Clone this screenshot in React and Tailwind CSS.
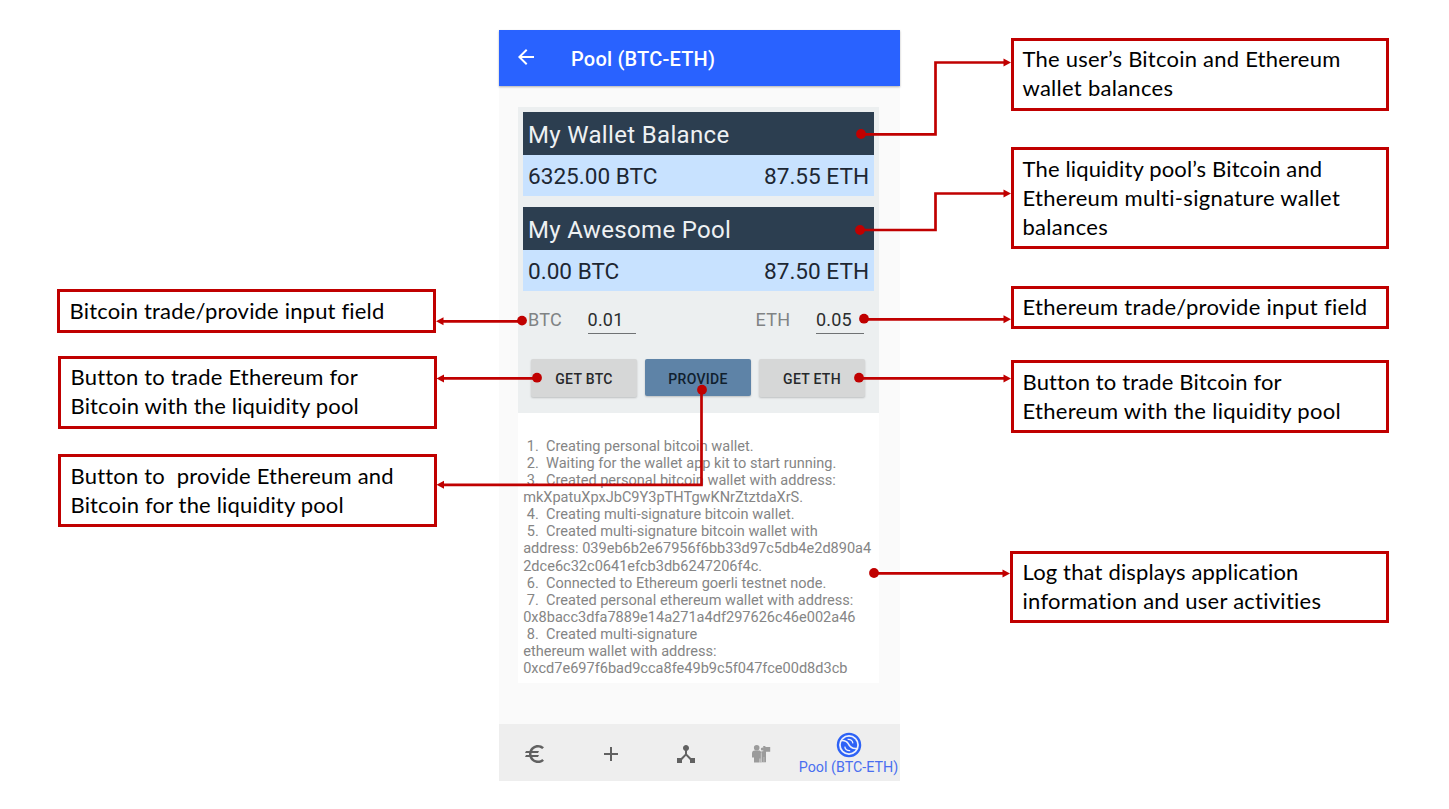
import { MdAdd, MdArrowBack, MdDeviceHub, MdEuro } from "react-icons/md";

function Callout({ className, lines }) {
  return (
    <div
      className={`shrink-0 border-[3px] border-[#c00000] bg-white font-['Lato',sans-serif] text-[22px] leading-[29px] text-black [font-variant-ligatures:none] ${className}`}
    >
      {lines.map(([text, tracking]) => (
        <div key={text} className={`whitespace-pre ${tracking}`}>
          {text}
        </div>
      ))}
    </div>
  );
}

function BalanceCard({ title, btc, eth }) {
  return (
    <section className="mb-[11px] h-[84px]">
      <h2 className="h-[43px] bg-[#2c3e50] pl-[5px] text-[24px] leading-[46px] tracking-[0.33px] text-[#eef1f3]">
        {title}
      </h2>
      <div className="flex h-[41px] justify-between bg-[#c8e2ff] pr-[5px] pl-[5px] text-[22.6px] leading-[44px] text-[#1d2733]">
        <span>{btc}</span>
        <span>{eth}</span>
      </div>
    </section>
  );
}

function AmountField({ label, value }) {
  return (
    <div className="flex gap-[25.5px]">
      <span className="text-[18px] leading-[36px] tracking-[0.3px] text-[#808384]">{label}</span>
      <span className="h-[32px] w-[48px] border-b border-[#6f7274] text-[18px] leading-[36px] tracking-[0.2px] text-[#2b2d2e]">
        {value}
      </span>
    </div>
  );
}

const logLines = [
  " 1.  Creating personal bitcoin wallet.",
  " 2.  Waiting for the wallet app kit to start running.",
  " 3.  Created personal bitcoin wallet with address:",
  "mkXpatuXpxJbC9Y3pTHTgwKNrZtztdaXrS.",
  " 4.  Creating multi-signature bitcoin wallet.",
  " 5.  Created multi-signature bitcoin wallet with",
  "address: 039eb6b2e67956f6bb33d97c5db4e2d890a4",
  "2dce6c32c0641efcb3db6247206f4c.",
  " 6.  Connected to Ethereum goerli testnet node.",
  " 7.  Created personal ethereum wallet with address:",
  "0x8bacc3dfa7889e14a271a4df297626c46e002a46",
  " 8.  Created multi-signature",
  "ethereum wallet with address:",
  "0xcd7e697f6bad9cca8fe49b9c5f047fce00d8d3cb",
];

function PeopleIcon() {
  return (
    <svg width="20" height="20" viewBox="0 0 20 20" fill="#9b9b9b">
      <circle cx="5.7" cy="3.8" r="2.8" />
      <path d="M1 9.4Q1 6.4 3.6 6.4H8.6L10.4 8V18.6H9.3V14.5H8.6V18.6H3V13.5H1Z" />
      <circle cx="11.4" cy="5" r="1.6" />
      <path d="M10.4 7.2H12.2V2H14.4V3H19.2V7.8H15V18.2H10.8Z" />
      <path d="M10.2 9V18.6M12.9 13V18.6" stroke="#cfcfcf" strokeWidth="0.6" />
    </svg>
  );
}

function PoolIcon() {
  return (
    <svg width="26" height="26" viewBox="0 0 26 26">
      <circle cx="13" cy="13" r="11.1" fill="#eef1fb" stroke="#2d62f6" strokeWidth="2.3" />
      <circle cx="13" cy="13" r="8.2" fill="#2d62f6" />
      <path
        d="M5 8.6C8 8.4 11 9.3 12.4 11.9C13.8 15 17 16.9 21 16.4"
        fill="none"
        stroke="#eef1fb"
        strokeWidth="1.5"
      />
      <path d="M11.6 7.4C14.6 7 16.6 8.8 16.9 11.3" fill="none" stroke="#eef1fb" strokeWidth="1.3" />
      <path d="M8.8 14.6C9 17.2 11.2 19 14.2 18.6" fill="none" stroke="#eef1fb" strokeWidth="1.3" />
    </svg>
  );
}

function Phone() {
  return (
    <main className="mt-[30px] flex h-[751px] w-[401px] shrink-0 flex-col bg-[#fafafa] font-['Roboto',sans-serif]">
      <header className="flex h-[56px] shrink-0 items-center bg-[#2962ff] pl-[14.5px] text-white shadow-[0_1px_2px_rgba(0,0,0,0.3)]">
        <MdArrowBack size={24} className="mb-[2px]" />
        <h1 className="pt-[2px] pl-[33.5px] text-[20px] font-medium tracking-[0.2px]">Pool (BTC-ETH)</h1>
      </header>

      <div className="mt-[21px] ml-[19px] h-[306px] w-[361px] shrink-0 bg-[#eceff0] px-[5px] pt-[5px]">
        <BalanceCard title="My Wallet Balance" btc="6325.00 BTC" eth="87.55 ETH" />
        <BalanceCard title="My Awesome Pool" btc="0.00 BTC" eth="87.50 ETH" />
        <div className="flex justify-between pr-[10px] pl-[5px]">
          <AmountField label="BTC" value="0.01" />
          <AmountField label="ETH" value="0.05" />
        </div>
        <div className="mt-[21px] flex justify-between pr-[9px] pl-[8px] text-[14px] leading-[20px] font-medium tracking-[0.3px] text-[#27292b]">
          <button className="h-[38px] w-[106px] rounded-[2px] bg-[#d6d7d7] pt-px shadow-[0_1px_2px_rgba(0,0,0,0.2)]">
            GET BTC
          </button>
          <button className="h-[37px] w-[106px] rounded-[2px] bg-[#5e83a7] pt-[3px] text-[#10202e] shadow-[0_1px_2px_rgba(0,0,0,0.2)]">
            PROVIDE
          </button>
          <button className="h-[38px] w-[106px] rounded-[2px] bg-[#d6d7d7] pt-px shadow-[0_1px_2px_rgba(0,0,0,0.2)]">
            GET ETH
          </button>
        </div>
      </div>

      <div className="ml-[19px] h-[270px] w-[361px] shrink-0 bg-white pt-[24.7px] pl-[5.2px] text-[14.55px] leading-[17.13px] text-[#858585]">
        {logLines.map((line) => (
          <div key={line} className="whitespace-pre">
            {line}
          </div>
        ))}
      </div>

      <nav className="mt-auto flex h-[57px] shrink-0 bg-[#eeeeee] text-[#616161]">
        <div className="flex w-[75px] items-center pt-[2px] pl-[24px]">
          <MdEuro size={24} />
        </div>
        <div className="flex w-[75px] items-center pt-[3px] pl-[24.5px]">
          <MdAdd size={24} />
        </div>
        <div className="flex w-[75px] items-center pt-[3px] pl-[25px]">
          <MdDeviceHub size={24} />
        </div>
        <div className="flex w-[74px] items-center pt-[2px] pl-[27px]">
          <PeopleIcon />
        </div>
        <div className="flex w-[101px] flex-col items-center pt-[8px]">
          <PoolIcon />
          <span className="mt-px text-[14.3px] leading-[17px] whitespace-nowrap text-[#4a6ef0]">Pool (BTC-ETH)</span>
        </div>
      </nav>
    </main>
  );
}

const connectors = [
  { dot: [861, 134], line: "M861 134.3H935.5V62.5H1006", tip: [1011, 62.5], dir: 1 },
  { dot: [860, 230], line: "M860 230H935.5V193.5H1006", tip: [1011, 193.5], dir: 1 },
  { dot: [864, 318.7], line: "M864 319.3H1006", tip: [1011, 319.3], dir: 1 },
  { dot: [859, 377.7], line: "M859 378.4H1006", tip: [1011, 378.4], dir: 1 },
  { dot: [874, 573], line: "M874 573.4H1005", tip: [1010, 573.4], dir: 1 },
  { dot: [522, 320.6], line: "M522 321.3H441", tip: [436, 321.3], dir: -1 },
  { dot: [537, 377.7], line: "M537 378.4H441", tip: [436.5, 378.4], dir: -1 },
  { dot: [702, 389.7], line: "M701.5 390V484.8H441", tip: [436.5, 484.8], dir: -1 },
];

function Connectors() {
  return (
    <svg className="pointer-events-none absolute inset-0" width="1449" height="809" fill="#c00000">
      {connectors.map(({ dot, line, tip: [x, y], dir }) => (
        <g key={line}>
          <path d={line} fill="none" stroke="#c00000" strokeWidth="2.7" />
          <circle cx={dot[0]} cy={dot[1]} r="4.9" />
          <path d={`M${x} ${y}L${x - dir * 7.5} ${y - 4}V${y + 4}Z`} />
        </g>
      ))}
    </svg>
  );
}

export default function App() {
  return (
    <div className="relative flex h-[809px] w-[1449px] overflow-hidden bg-white">
      <aside className="flex w-[499px] shrink-0 flex-col pt-[289px] pl-[57px]">
        <Callout
          className="h-[44px] w-[379px] pt-[4px] pl-[9.5px]"
          lines={[["Bitcoin trade/provide input field", "tracking-[0.18px]"]]}
        />
        <Callout
          className="mt-[23px] ml-px h-[73px] w-[379px] pt-[3px] pl-[9.5px]"
          lines={[
            ["Button to trade Ethereum for", "tracking-[0.21px]"],
            ["Bitcoin with the liquidity pool", "tracking-[0.17px]"],
          ]}
        />
        <Callout
          className="mt-[25px] ml-px h-[73px] w-[379px] pt-[4px] pl-[9.5px]"
          lines={[
            ["Button to  provide Ethereum and", "tracking-[0.21px]"],
            ["Bitcoin for the liquidity pool", "tracking-[0.17px]"],
          ]}
        />
      </aside>

      <Phone />

      <aside className="flex flex-col pt-[38px] pl-[111px]">
        <Callout
          className="h-[73px] w-[378px] pt-[3px] pl-[8.5px]"
          lines={[
            ["The user’s Bitcoin and Ethereum", "tracking-[0.23px]"],
            ["wallet balances", "tracking-[0.27px]"],
          ]}
        />
        <Callout
          className="mt-[36px] h-[102px] w-[378px] pt-[4px] pl-[8.5px]"
          lines={[
            ["The liquidity pool’s Bitcoin and", "tracking-[0.15px]"],
            ["Ethereum multi-signature wallet", "tracking-[0.32px]"],
            ["balances", "tracking-[0.3px]"],
          ]}
        />
        <Callout
          className="mt-[37px] h-[43px] w-[378px] pt-[3px] pl-[8.5px]"
          lines={[["Ethereum trade/provide input field", "tracking-[0.29px]"]]}
        />
        <Callout
          className="mt-[31px] h-[73px] w-[378px] pt-[4px] pl-[8.5px]"
          lines={[
            ["Button to trade Bitcoin for", "tracking-[0.14px]"],
            ["Ethereum with the liquidity pool", "tracking-[0.29px]"],
          ]}
        />
        <Callout
          className="mt-[118px] -ml-px h-[72px] w-[379px] pt-[3px] pl-[9.5px]"
          lines={[
            ["Log that displays application", "tracking-[0.16px]"],
            ["information and user activities", "tracking-[0.25px]"],
          ]}
        />
      </aside>

      <Connectors />
    </div>
  );
}
